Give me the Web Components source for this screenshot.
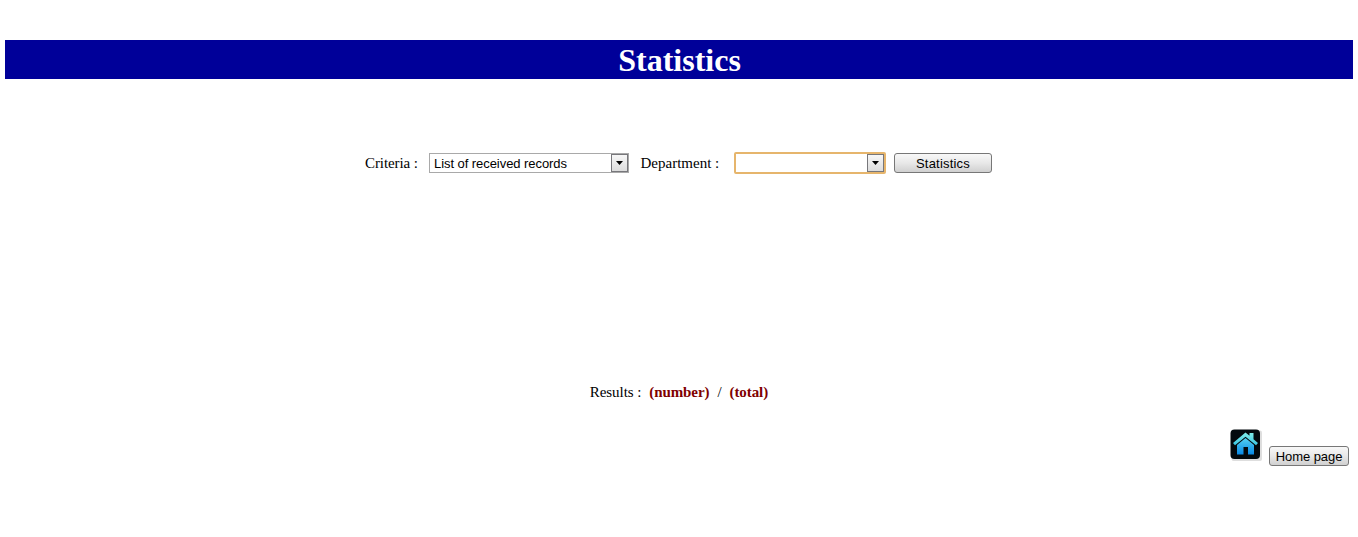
<!DOCTYPE html>
<html lang="en">
<head>
<meta charset="utf-8">
<title>Statistics</title>
<style>
body { margin: 0; background: #fff; color: #000; font: 15px/18px "Liberation Serif", "Times New Roman", serif; }
</style>
</head>
<body>
<statistics-page></statistics-page>
<script>
function define(name, html) {
  const template = document.createElement('template');
  template.innerHTML = html;
  customElements.define(name, class extends HTMLElement {
    constructor() {
      super();
      this.attachShadow({ mode: 'open' }).append(template.content.cloneNode(true));
    }
  });
}

define('page-banner', `
<style>
:host { display: block; background: #000099; color: #fff; }
h1 { box-sizing: border-box; margin: 0; height: 39px; padding: 1px 0 0 1px; font-size: 32px; line-height: 39px; text-align: center; }
</style>
<h1><slot></slot></h1>`);

define('drop-down', `
<style>
:host { display: flex; box-sizing: border-box; width: 200px; height: 20px; padding: 0; border: 1px solid #a9a9a9; background: #fff; font: 13px/19px "Liberation Sans", Arial, sans-serif; letter-spacing: -.06px; }
:host([active]) { width: 152px; height: 22px; border: 2px solid #e6b56c; border-radius: 2px; }
.value { flex: 1; padding-left: 4px; white-space: nowrap; }
.arrow { box-sizing: border-box; width: 17px; height: 18px; border: 1px solid #77777b; background: linear-gradient(#f7f7f7, #dcdcdc); display: grid; place-items: center; }
svg { display: block; }
</style>
<span class="value"><slot></slot></span>
<span class="arrow"><svg width="7" height="4" viewBox="0 0 7 4"><path d="M0 0h7L3.5 4z"/></svg></span>`);

define('push-button', `
<style>
:host { display: block; }
button { display: block; box-sizing: border-box; width: 100%; height: 20px; margin: 0; padding: 1px 0 0; border: 1px solid #777; border-radius: 3px; background: linear-gradient(#f8f8f8, #e8e8e8 50%, #d0d0d0); color: #000; font: 13px/18px "Liberation Sans", Arial, sans-serif; text-align: center; white-space: nowrap; letter-spacing: var(--tracking, 0); }
</style>
<button type="button"><slot></slot></button>`);

define('home-icon', `
<style>
:host { display: block; width: 32px; height: 32px; }
svg { display: block; }
</style>
<svg width="32" height="32" viewBox="0 0 32 32">
  <defs>
    <linearGradient id="roof" x2="0" y2="1"><stop stop-color="#82eee9"/><stop offset="1" stop-color="#39c5e2"/></linearGradient>
    <linearGradient id="walls" x2="0" y2="1"><stop stop-color="#55d2f0"/><stop offset="1" stop-color="#0788e5"/></linearGradient>
  </defs>
  <rect x="1.5" y="1.5" width="30.5" height="30.5" rx="2" fill="#dedede"/>
  <rect x=".5" y=".5" width="29.5" height="29.5" rx="4" fill="#02090d"/>
  <path d="M7 16 15.5 9 24 16V25.5h-6v-7.5h-4.5v7.5H7z" fill="url(#walls)"/>
  <path d="M3 14 15.5 3.5l4 3.3V4h4v6.2l4.5 3.8-2 2.3L15.5 7.8l-10.5 8.5z" fill="url(#roof)"/>
</svg>`);

define('filter-bar', `
<style>
:host { display: flex; align-items: center; height: 22px; padding-left: 365px; }
.criteria { width: 64px; letter-spacing: -.08px; }
.department { width: 94px; margin-left: 11.5px; }
drop-down[active] { margin-left: -.5px; }
push-button { width: 98px; margin-left: 8px; --tracking: .2px; }
</style>
<span class="criteria">Criteria :</span>
<drop-down>List of received records</drop-down>
<span class="department">Department :</span>
<drop-down active></drop-down>
<push-button>Statistics</push-button>`);

define('result-count', `
<style>
:host { display: flex; justify-content: center; gap: 8px; letter-spacing: -.08px; }
b { color: #800000; }
</style>
<span>Results :</span><b>(number)</b><span>/</span><b>(total)</b>`);

define('page-footer', `
<style>
:host { display: flex; justify-content: flex-end; gap: 7px; padding-right: 9px; }
push-button { width: 80px; margin-top: 17px; --tracking: -.06px; }
</style>
<home-icon></home-icon><push-button>Home page</push-button>`);

define('statistics-page', `
<style>
:host { display: block; box-sizing: border-box; height: 537px; padding-top: 40px; overflow: hidden; }
page-banner { margin: 0 5px; }
filter-bar { margin-top: 73px; }
result-count { margin-top: 209px; }
page-footer { margin-top: 28px; }
</style>
<page-banner>Statistics</page-banner>
<filter-bar></filter-bar>
<result-count></result-count>
<page-footer></page-footer>`);
</script>
</body>
</html>
